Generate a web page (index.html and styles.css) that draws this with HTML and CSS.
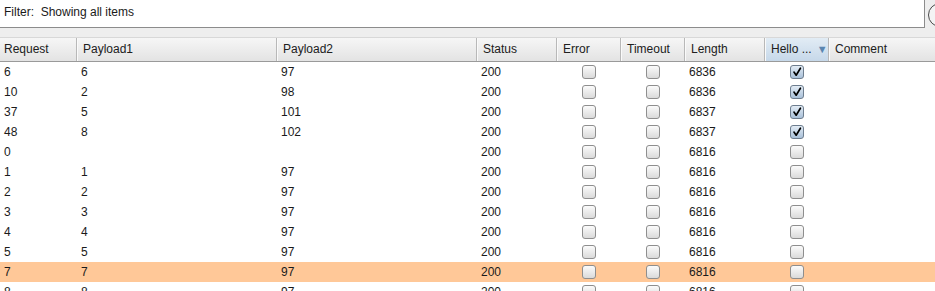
FILE: index.html
```html
<!DOCTYPE html>
<html>
<head>
<meta charset="utf-8">
<link rel="stylesheet" href="styles.css">
</head>
<body>
<div class="filter-row">
  <div class="filter-field">Filter:&nbsp; Showing all items</div>
  <div class="filter-btn-wrap"><div class="filter-btn"></div></div>
</div>
<div class="gap"></div>
<div class="table">
  <div class="row head">
    <div class="c">Request</div>
    <div class="c">Payload1</div>
    <div class="c">Payload2</div>
    <div class="c">Status</div>
    <div class="c">Error</div>
    <div class="c">Timeout</div>
    <div class="c">Length</div>
    <div class="c sorted">Hello ...<span class="arrow">▼</span></div>
    <div class="c">Comment</div>
  </div>
  <div class="row"><div class="c">6</div><div class="c">6</div><div class="c">97</div><div class="c">200</div><div class="c cb"><span class="box"></span></div><div class="c cb"><span class="box"></span></div><div class="c">6836</div><div class="c cb"><span class="box on"><svg viewBox="0 0 13 13"><path d="M3.2 6.6 L5.6 10 L10.2 2.4" /></svg></span></div><div class="c"></div></div>
  <div class="row"><div class="c">10</div><div class="c">2</div><div class="c">98</div><div class="c">200</div><div class="c cb"><span class="box"></span></div><div class="c cb"><span class="box"></span></div><div class="c">6836</div><div class="c cb"><span class="box on"><svg viewBox="0 0 13 13"><path d="M3.2 6.6 L5.6 10 L10.2 2.4" /></svg></span></div><div class="c"></div></div>
  <div class="row"><div class="c">37</div><div class="c">5</div><div class="c">101</div><div class="c">200</div><div class="c cb"><span class="box"></span></div><div class="c cb"><span class="box"></span></div><div class="c">6837</div><div class="c cb"><span class="box on"><svg viewBox="0 0 13 13"><path d="M3.2 6.6 L5.6 10 L10.2 2.4" /></svg></span></div><div class="c"></div></div>
  <div class="row"><div class="c">48</div><div class="c">8</div><div class="c">102</div><div class="c">200</div><div class="c cb"><span class="box"></span></div><div class="c cb"><span class="box"></span></div><div class="c">6837</div><div class="c cb"><span class="box on"><svg viewBox="0 0 13 13"><path d="M3.2 6.6 L5.6 10 L10.2 2.4" /></svg></span></div><div class="c"></div></div>
  <div class="row"><div class="c">0</div><div class="c"></div><div class="c"></div><div class="c">200</div><div class="c cb"><span class="box"></span></div><div class="c cb"><span class="box"></span></div><div class="c">6816</div><div class="c cb"><span class="box"></span></div><div class="c"></div></div>
  <div class="row"><div class="c">1</div><div class="c">1</div><div class="c">97</div><div class="c">200</div><div class="c cb"><span class="box"></span></div><div class="c cb"><span class="box"></span></div><div class="c">6816</div><div class="c cb"><span class="box"></span></div><div class="c"></div></div>
  <div class="row"><div class="c">2</div><div class="c">2</div><div class="c">97</div><div class="c">200</div><div class="c cb"><span class="box"></span></div><div class="c cb"><span class="box"></span></div><div class="c">6816</div><div class="c cb"><span class="box"></span></div><div class="c"></div></div>
  <div class="row"><div class="c">3</div><div class="c">3</div><div class="c">97</div><div class="c">200</div><div class="c cb"><span class="box"></span></div><div class="c cb"><span class="box"></span></div><div class="c">6816</div><div class="c cb"><span class="box"></span></div><div class="c"></div></div>
  <div class="row"><div class="c">4</div><div class="c">4</div><div class="c">97</div><div class="c">200</div><div class="c cb"><span class="box"></span></div><div class="c cb"><span class="box"></span></div><div class="c">6816</div><div class="c cb"><span class="box"></span></div><div class="c"></div></div>
  <div class="row"><div class="c">5</div><div class="c">5</div><div class="c">97</div><div class="c">200</div><div class="c cb"><span class="box"></span></div><div class="c cb"><span class="box"></span></div><div class="c">6816</div><div class="c cb"><span class="box"></span></div><div class="c"></div></div>
  <div class="row sel"><div class="c">7</div><div class="c">7</div><div class="c">97</div><div class="c">200</div><div class="c cb"><span class="box"></span></div><div class="c cb"><span class="box"></span></div><div class="c">6816</div><div class="c cb"><span class="box"></span></div><div class="c"></div></div>
  <div class="row"><div class="c">8</div><div class="c">8</div><div class="c">97</div><div class="c">200</div><div class="c cb"><span class="box"></span></div><div class="c cb"><span class="box"></span></div><div class="c">6816</div><div class="c cb"><span class="box"></span></div><div class="c"></div></div>
</div>
</body>
</html>
```
FILE: styles.css
```css
html, body {
  margin: 0;
  padding: 0;
  width: 935px;
  height: 291px;
  overflow: hidden;
  background: #eeeeee;
  font-family: "Liberation Sans", Arial, sans-serif;
  font-size: 12px;
  color: #1a1a1a;
}
.filter-row {
  display: flex;
  height: 28px;
}
.filter-field {
  width: 924px;
  height: 27px;
  background: #ffffff;
  border-right: 1px solid #8c8c8c;
  border-bottom: 1px solid #8c8c8c;
  box-sizing: content-box;
  padding-left: 4px;
  margin-left: -4px;
  line-height: 25px;
  text-indent: 4px;
}
.filter-btn-wrap {
  flex: 1;
  position: relative;
  overflow: hidden;
}
.filter-btn {
  position: absolute;
  left: 3px;
  top: 3px;
  width: 22px;
  height: 22px;
  border: 1px solid #4a4a4a;
  border-radius: 50%;
  background: #f4f4f4;
}
.gap {
  height: 9px;
}
.table {
  background: #ffffff;
}
.row {
  display: grid;
  grid-template-columns: 77px 200px 200px 80px 64px 64px 80px 64px 1fr;
  height: 20px;
  align-items: center;
}
.row .c {
  padding-left: 4px;
  white-space: nowrap;
  overflow: hidden;
}
.row.head {
  height: 25px;
  background: linear-gradient(#f6f6f6, #e3e3e3);
  border-top: 1px solid #d8d8d8;
  border-bottom: 1px solid #9a9a9a;
  box-sizing: border-box;
  align-items: stretch;
}
.row.head .c {
  border-right: 1px solid #b8b8b8;
  border-left: 1px solid #fafafa;
  padding-left: 5px;
  line-height: 22px;
  color: #202020;
}
.row.head .c:first-child {
  border-left: none;
  padding-left: 4px;
}
.row.head .c:last-child {
  border-right: none;
}
.row.head .sorted {
  background: linear-gradient(#e2ecf5, #c6d8e9);
}
.arrow {
  color: #5a86b0;
  font-size: 11px;
  margin-left: 5px;
}
.row.sel {
  background: #ffc898;
}
.row .cb {
  padding-left: 0;
  display: flex;
  justify-content: center;
  align-items: center;
  height: 20px;
}
.box {
  width: 14px;
  height: 14px;
  box-sizing: border-box;
  border: 1px solid #8e8e8e;
  border-radius: 3px;
  background: linear-gradient(#fbfbfb, #dadada);
  display: block;
  position: relative;
}
.box.on {
  background: linear-gradient(#e3ecf5, #a9c0d8);
  border-color: #6d7d8e;
}
.box svg {
  position: absolute;
  left: 0;
  top: 0;
  width: 12px;
  height: 12px;
}
.box svg path {
  fill: none;
  stroke: #000000;
  stroke-width: 1.8;
  stroke-linecap: round;
  stroke-linejoin: round;
}
```
